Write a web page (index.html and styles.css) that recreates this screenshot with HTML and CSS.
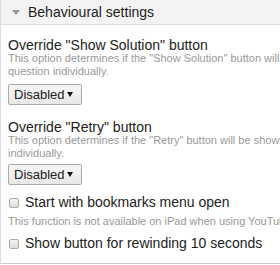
FILE: index.html
```html
<!DOCTYPE html>
<html lang="en">
<head>
    <meta charset="UTF-8">
    <title>Behavioural settings</title>
    <link rel="stylesheet" href="styles.css">
</head>
<body>
    <div class="group">
        <div class="group-title">
            <span class="arrow"></span>
            <span>Behavioural settings</span>
        </div>
        <div class="group-content">
            <div class="field">
                <label class="field-label">Override "Show Solution" button</label>
                <div class="description">This option determines if the "Show Solution" button will be shown for all questions, disabled for all or configured for each question individually.</div>
                <span class="select-wrap">
                    <select class="select"><option>Disabled</option></select>
                </span>
            </div>
            <div class="field retry">
                <label class="field-label">Override "Retry" button</label>
                <div class="description">This option determines if the "Retry" button will be shown for all questions, disabled for all or configured for each question individually.</div>
                <span class="select-wrap">
                    <select class="select"><option>Disabled</option></select>
                </span>
            </div>
            <div class="field bookmarks">
                <label class="check"><input type="checkbox"> Start with bookmarks menu open</label>
                <div class="description single">This function is not available on iPad when using YouTube as video source.</div>
            </div>
            <div class="field last">
                <label class="check"><input type="checkbox"> Show button for rewinding 10 seconds</label>
            </div>
        </div>
    </div>
</body>
</html>
```

FILE: styles.css
```css
html, body {
    overflow: hidden;
}

body {
    margin: 0;
    font-family: 'Liberation Sans', Arial, sans-serif;
    color: #222;
    background: #fff;
}

.group {
    border-left: 1px solid #ddd;
    border-bottom: 1px solid #ccc;
    width: 640px;
}

.group-title {
    background: #f3f3f3;
    border-bottom: 1px solid #ddd;
    height: 24px;
    font-size: 14px;
    display: flex;
    align-items: center;
    padding-left: 11px;
    white-space: nowrap;
}

.arrow {
    width: 0;
    height: 0;
    border-left: 4px solid transparent;
    border-right: 4px solid transparent;
    border-top: 5px solid #999;
    margin-right: 8px;
}

.group-content {
    padding: 13px 8px 11px 7px;
}

.field {
    margin-bottom: 15px;
}

.field.retry {
    margin-bottom: 9px;
}

.field.bookmarks {
    margin-bottom: 7px;
}

.field.last {
    margin-bottom: 0;
}

.field-label {
    display: block;
    font-size: 14px;
    line-height: 14px;
    white-space: nowrap;
}

.description {
    font-size: 11px;
    color: #999;
    line-height: 13px;
    width: 600px;
    margin-bottom: 6px;
}

.retry .description {
    margin-bottom: 4px;
}

.description.single {
    margin: 4px 0 0;
    white-space: nowrap;
}

.select-wrap {
    position: relative;
    display: inline-block;
}

.select-wrap::after {
    content: "";
    position: absolute;
    right: 9px;
    top: 8px;
    border-left: 3px solid transparent;
    border-right: 3px solid transparent;
    border-top: 5px solid #111;
    pointer-events: none;
}

.select {
    -webkit-appearance: none;
    appearance: none;
    font-family: 'Liberation Sans', Arial, sans-serif;
    font-size: 13px;
    color: #222;
    width: 74px;
    height: 21px;
    padding: 0 0 0 5px;
    margin: 0;
    border: 1px solid #aaa;
    border-radius: 2px;
    background: linear-gradient(#f6f6f6, #e8e8e8);
}

.check {
    display: flex;
    align-items: center;
    font-size: 14px;
    line-height: 17px;
    white-space: nowrap;
}

.check input {
    -webkit-appearance: none;
    appearance: none;
    margin: 0 6px 0 1px;
    width: 10px;
    height: 10px;
    border: 1px solid #aaa;
    border-radius: 2px;
    background: linear-gradient(#f4f4f4, #dcdcdc);
}
```
